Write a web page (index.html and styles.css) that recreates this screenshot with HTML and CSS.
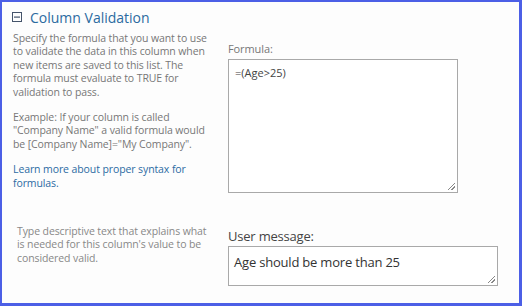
FILE: index.html
```html
<!DOCTYPE html>
<html>
<head>
<meta charset="utf-8">
<link rel="stylesheet" href="styles.css">
</head>
<body>
<div class="panel">
  <div class="title">
    <svg class="toggle" width="10" height="10" viewBox="0 0 10 10"><rect x="0.5" y="0.5" width="9" height="9" fill="none" stroke="#44536a" stroke-width="1"/><rect x="2" y="4.5" width="6" height="1.2" fill="#44536a"/></svg>
    <span>Column Validation</span>
  </div>
  <div class="row row1">
    <div class="desc">
      <p>Specify the formula that you want to use to validate the data in this column when new items are saved to this list. The formula must evaluate to TRUE for validation to pass.</p>
      <p>Example: If your column is called "Company Name" a valid formula would be [Company Name]="My Company".</p>
      <p><a class="link">Learn more about proper syntax for formulas.</a></p>
    </div>
    <div class="field">
      <div class="label">Formula:</div>
      <div class="textarea formula">=(Age&gt;25)<span class="grip"></span></div>
    </div>
  </div>
  <div class="row row2">
    <div class="desc small">
      <p>Type descriptive text that explains what is needed for this column's value to be considered valid.</p>
    </div>
    <div class="field">
      <div class="label big">User message:</div>
      <div class="textarea message">Age should be more than 25<span class="grip"></span></div>
    </div>
  </div>
</div>
</body>
</html>
```
FILE: styles.css
```css
html, body { margin: 0; padding: 0; background: #fff; }
body { width: 522px; height: 306px; overflow: hidden; }
.panel {
  box-sizing: border-box;
  width: 522px; height: 306px;
  border-style: solid;
  border-color: #4c5fe6;
  border-width: 2px 3px 3px 2px;
  background: #fdfdfd;
  font-family: "Open Sans", sans-serif;
  color: #777;
  position: relative;
}
.title {
  display: flex; align-items: center; gap: 8px;
  margin: 6px 0 0 10px;
  height: 18px;
  color: #2b6aa0;
  font-size: 14px;
}
.toggle { display: block; }
.row { display: grid; grid-template-columns: 214px 1fr; }
.desc { padding-left: 11px; font-size: 10.5px; line-height: 13.4px; letter-spacing: -0.1px; }
.desc p { margin: 0 0 12px 0; }
.row1 .desc { padding-top: 6px; }
.link { color: #2c6ba3; }
.field { padding-left: 12px; }
.row1 .field { padding-top: 16px; }
.label { font-size: 11px; line-height: 14px; color: #777; margin-bottom: 3px; letter-spacing: -0.1px; }
.label.big { font-size: 13px; line-height: 17px; color: #444; margin-bottom: 1px; letter-spacing: -0.2px; }
.textarea {
  position: relative;
  box-sizing: border-box;
  border: 1px solid #a9a9a9;
  background: #fff;
  color: #444;
}
.formula { width: 230px; height: 134px; font-size: 11px; padding: 5px 6px; }
.message { width: 270px; height: 40px; font-size: 13px; padding: 6px 5px; color: #333; letter-spacing: -0.2px; }
.grip {
  position: absolute; right: 2px; bottom: 2px; width: 7px; height: 7px;
  background: linear-gradient(135deg, transparent 45%, #888 45%, #888 55%, transparent 55%, transparent 70%, #888 70%, #888 80%, transparent 80%);
}
.row2 { margin-top: 13px; }
.row2 .desc { padding-left: 15px; padding-top: 10px; color: #888; }
.row2 .field { padding-top: 13px; }
.row2 .desc p { margin: 0; }
```
